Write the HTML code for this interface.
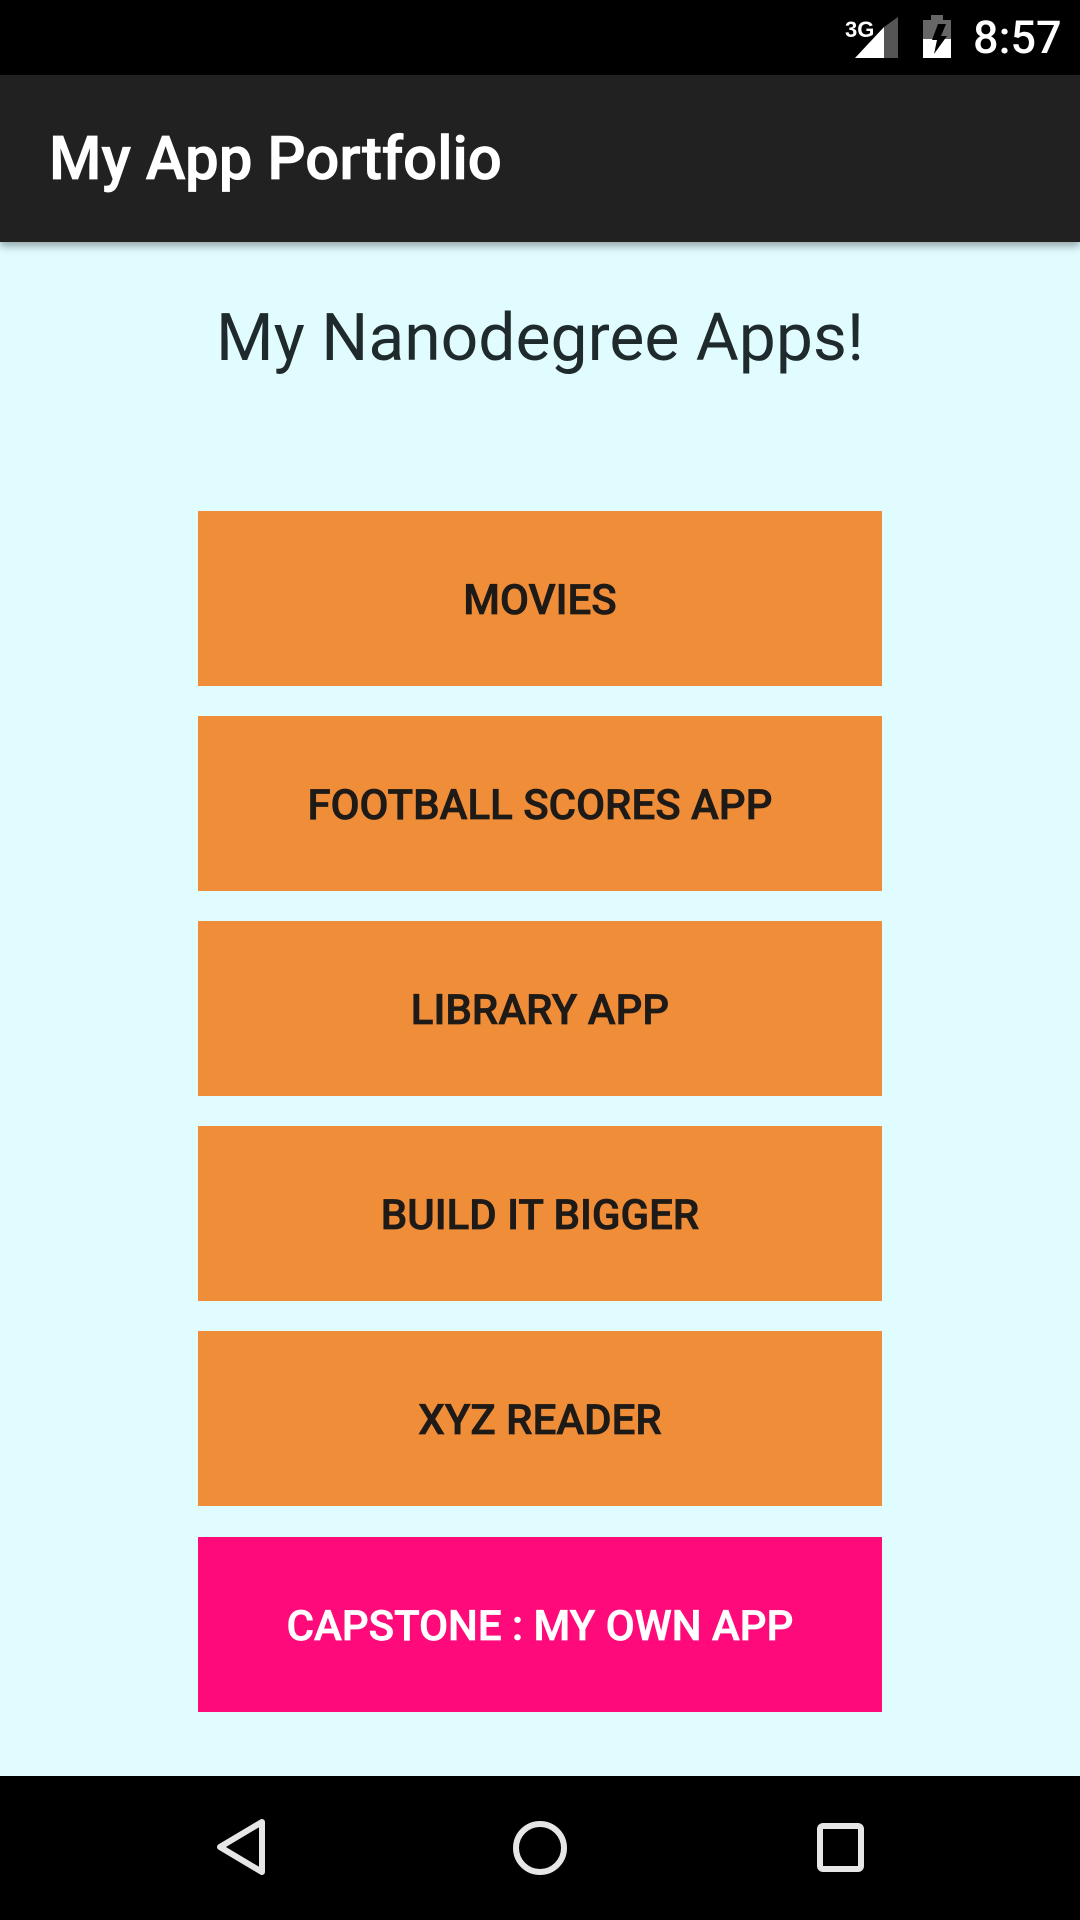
<!DOCTYPE html>
<html><head><meta charset="utf-8"><style>
*{margin:0;padding:0;box-sizing:border-box}
body{width:1080px;height:1920px;background:#E0FCFF;font-family:"Roboto","Liberation Sans",sans-serif;position:relative;overflow:hidden}
.status{position:absolute;left:0;top:0;width:1080px;height:75px;background:#000}
.appbar{position:absolute;left:0;top:75px;width:1080px;height:167px;background:#212121;box-shadow:0 4px 8px rgba(0,0,0,0.35)}
.appbar span{position:absolute;left:49px;top:54px;color:#fff;font-size:60px;font-weight:500;line-height:60px;-webkit-text-stroke:0.8px #fff}
h1{position:absolute;left:0;width:1080px;top:299px;text-align:center;font-weight:normal;font-size:66px;color:#1f2a2c;line-height:80px}
.btn{position:absolute;left:198px;width:684px;height:175px;background:#F08D38;color:#1e1a17;font-weight:500;font-size:42px;display:flex;align-items:center;justify-content:center;padding-top:4px;-webkit-text-stroke:0.7px #1e1a17}
.pink{background:#FF0A7A;color:#fff;-webkit-text-stroke:0.7px #fff}
.nav{position:absolute;left:0;top:1776px;width:1080px;height:144px;background:#000}
</style></head><body>
<div class="status">
<svg width="1080" height="75" style="position:absolute;left:0;top:0">
<text x="845" y="37" fill="#fff" font-family="Liberation Sans" font-weight="bold" font-size="22">3G</text>
<polygon points="855,58 884,58 884,27" fill="#fff"/>
<polygon points="884,58 898,58 898,17 884,27" fill="#555"/>
<rect x="923" y="20" width="28" height="38" fill="#fff"/>
<rect x="923" y="20" width="28" height="19" fill="#666"/>
<rect x="931" y="15" width="12" height="5" fill="#666"/>
<polygon points="938,24 946,24 941,36 947,36 934,54 937,40 932,40" fill="#000"/>
<text x="973" y="53" fill="#fff" font-weight="500" font-size="45">8:57</text>
</svg>
</div>
<div class="appbar"><span>My App Portfolio</span></div>
<h1>My Nanodegree Apps!</h1>
<div class="btn" style="top:511px">MOVIES</div>
<div class="btn" style="top:716px">FOOTBALL SCORES APP</div>
<div class="btn" style="top:921px">LIBRARY APP</div>
<div class="btn" style="top:1126px">BUILD IT BIGGER</div>
<div class="btn" style="top:1331px">XYZ READER</div>
<div class="btn pink" style="top:1537px">CAPSTONE : MY OWN APP</div>
<div class="nav">
<svg width="1080" height="144" style="position:absolute;left:0;top:0">
<polygon points="262,46 262,96 220,71" fill="none" stroke="#e6e6e6" stroke-width="6" stroke-linejoin="round"/>
<ellipse cx="540" cy="72" rx="24" ry="24" fill="none" stroke="#e6e6e6" stroke-width="6"/>
<rect x="820" y="50" width="41" height="43" rx="3" fill="none" stroke="#e6e6e6" stroke-width="6"/>
</svg>
</div>
</body></html>
